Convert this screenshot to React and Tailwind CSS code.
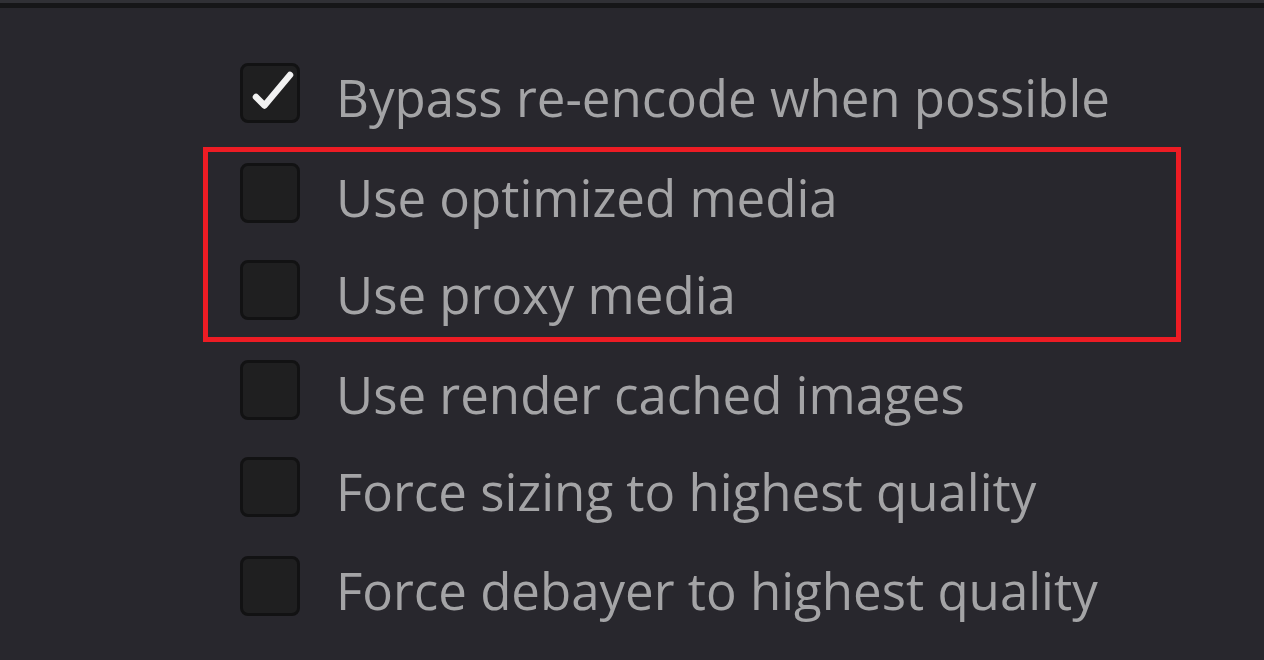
import React from 'react';

const CheckBox = ({ checked }) => (
    <div className="w-[60px] h-[60px] shrink-0 rounded-[8px] border-[3px] border-[#121213] bg-[#1f1f20]">
        {checked && (
            <svg width="54" height="54" viewBox="0 0 54 54">
                <path d="M13 31 L21.5 39.5 L47 9" fill="none" stroke="#f2f2f2" strokeWidth="6.5" strokeLinecap="round" strokeLinejoin="round" />
            </svg>
        )}
    </div>
);

// one option row: checkbox + label, mt sets the gap above the checkbox
const Row = ({ label, checked, className = '' }) => (
    <div className={`flex items-start gap-[36px] h-[60px] ${className}`}>
        <CheckBox checked={checked} />
        <span className="mt-[9px] text-[51px] leading-none text-[#a4a4a6] whitespace-nowrap">{label}</span>
    </div>
);

export default function App() {
    return (
        <div className="w-[1264px] h-[660px] bg-[#28272d] overflow-hidden" style={{ fontFamily: '"Open Sans", "Noto Sans", sans-serif' }}>
            <div className="h-[3px] bg-[#303035]" />
            <div className="h-[5px] bg-[#161618]" />
            <div className="pl-[240px] pt-[55px] flex flex-col">
                <Row label="Bypass re-encode when possible" checked />
                <div className="mt-[24px] -ml-[37px] w-[978px] h-[195px] border-[5px] border-[#ed1c24] pl-[32px] pt-[11px] flex flex-col">
                    <Row label="Use optimized media" />
                    <Row label="Use proxy media" className="mt-[37px]" />
                </div>
                <Row label="Use render cached images" className="mt-[18px]" />
                <Row label="Force sizing to highest quality" className="mt-[37px]" />
                <Row label="Force debayer to highest quality" className="mt-[39px]" />
            </div>
        </div>
    );
}
